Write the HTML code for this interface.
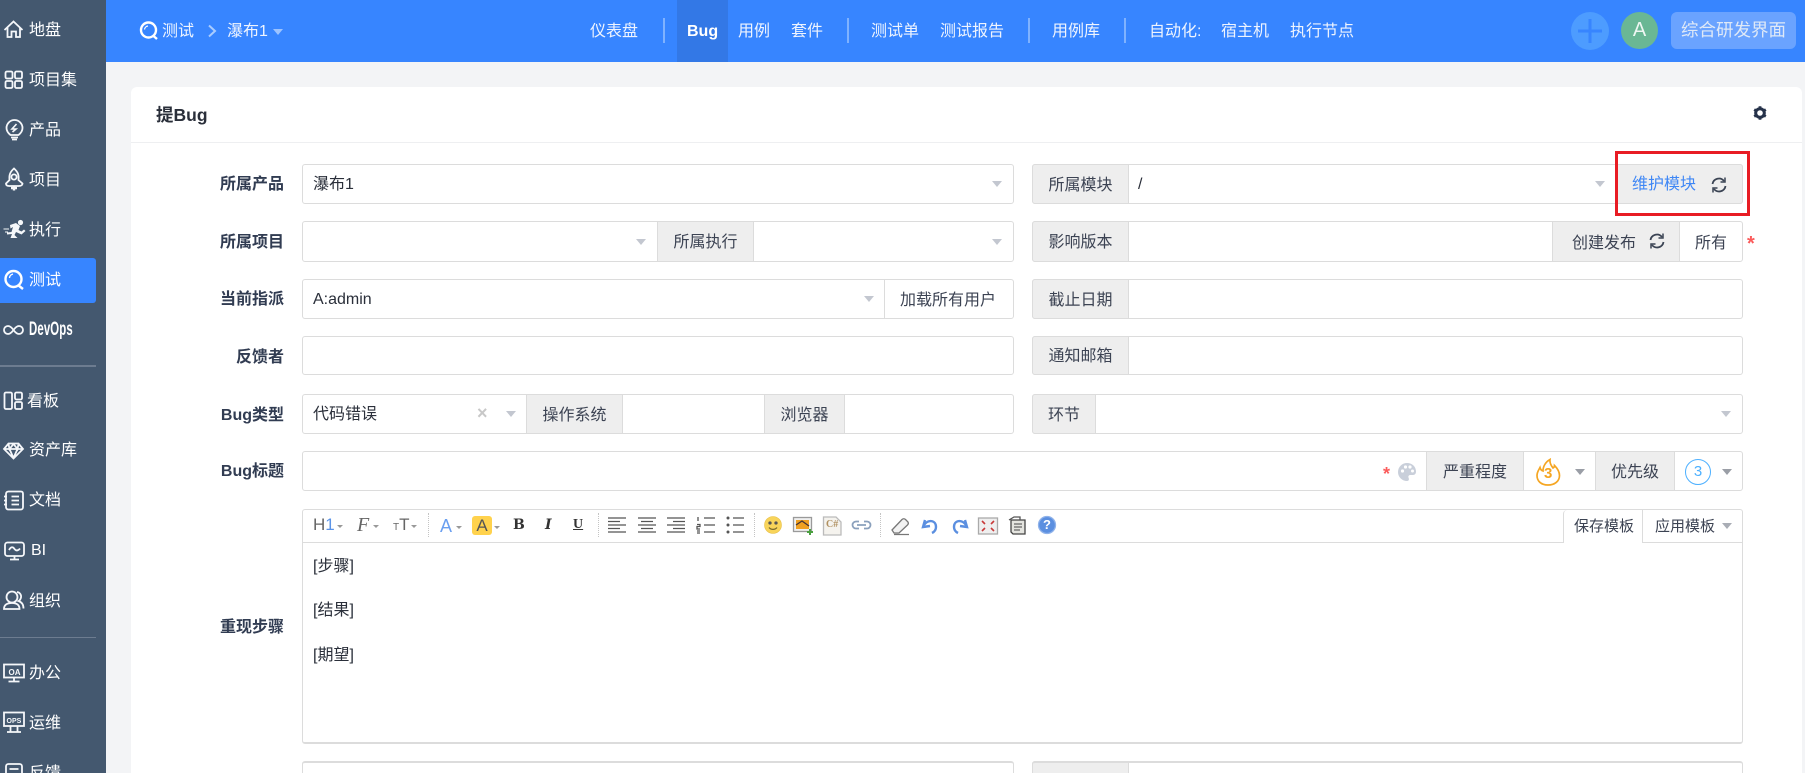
<!DOCTYPE html>
<html lang="zh"><head><meta charset="utf-8"><title>提Bug</title>
<style>
html,body{margin:0;padding:0;width:1805px;height:773px;overflow:hidden;background:#f3f4f6;}
body{position:relative;font-family:"Liberation Sans","Noto Sans CJK SC",sans-serif;font-size:16px;color:#2a2f3a;}
.a{position:absolute;box-sizing:border-box}
.t{position:absolute;white-space:nowrap;line-height:20px;height:20px}
.f{position:absolute;box-sizing:border-box;background:#fff;border:1px solid #dcdcdc;border-radius:3px}
.g{position:absolute;box-sizing:border-box;background:#eee;border:1px solid #dcdcdc;text-align:center;color:#3c4353;line-height:40px;white-space:nowrap}
.l{position:absolute;white-space:nowrap;line-height:20px;height:20px;right:1521px;font-weight:700;color:#313c52}
.c{position:absolute;width:0;height:0;border-left:5px solid transparent;border-right:5px solid transparent;border-top:6px solid #c3c7d0}
.s{color:#fff;left:29px}
.n{color:#eef4ff;top:22px}
.x{position:absolute;width:0;height:0;border-left:3px solid transparent;border-right:3px solid transparent;border-top:3px solid #999}
.m{position:absolute;width:0;border-left:1px dotted #c4c4c4;height:24px;top:513px}
.sep{position:absolute;top:18px;width:1.5px;height:25px;background:#7fb2ff}
</style></head><body>

<!-- sidebar -->
<div class="a" style="left:0;top:0;width:106px;height:773px;background:#44586f"></div>
<div class="a" style="left:0;top:258px;width:96px;height:45px;background:#3785ff;border-radius:0 3px 3px 0"></div>
<div class="a" style="left:0;top:365px;width:96px;height:2px;background:#6d7c90"></div>
<div class="a" style="left:0;top:637px;width:96px;height:1px;background:#6d7c90"></div>
<svg class="a" style="left:0;top:0" width="106" height="773" viewBox="0 0 106 773" fill="none" stroke="#f5f7fa" stroke-width="1.8">
<path d="M4.5 30L13.5 21.5L22.5 30M7.500 27.500V37H11.500V31.500H16V37H20V27.500"/>
<rect x="5.500" y="71.500" width="7" height="7" rx="1.500"/><rect x="15" y="71.500" width="7" height="7" rx="1.500"/><rect x="5.500" y="81" width="7" height="7" rx="1.500"/><rect x="15" y="81" width="7" height="7" rx="1.500"/>
<path d="M10.500 135C8 133 6.500 131 6.500 128A8 8 0 0 1 22.500 128C22.500 131 21 133 18.500 135ZM11 137.500H18M12 139.500H17"/><path d="M16.500 124L12 129H16L12.500 132" stroke-width="1.600"/>
<path d="M14 168.500C10 172 9 175 9.500 180L6 183.500C6 185 7 186 9 186H19C21 186 22.500 185 22.500 183.500L18.500 180C19 175 18 172 14 168.500Z"/><circle cx="14" cy="177" r="2.600"/><path d="M11 188H17M14 186V190.500" stroke-width="2.400"/>
<g fill="#f5f7fa" stroke="none"><circle cx="20.500" cy="222.500" r="2.600"/><path d="M10 225L16 223L20 226L18.500 230L21.500 231.500L24 229.500L25.500 231L21.500 234.500L16 232L14.500 235L17.500 238H10.500L12 234L7 234.500V232.500L11.500 232L13 227L10.500 228.500Z"/></g><path d="M3.500 229H9M5 232H8" stroke-width="1"/>
<circle cx="13.500" cy="279" r="8" stroke="#fff" stroke-width="2.400"/><path d="M18.500 285.500L23 289" stroke="#fff" stroke-width="2.400"/><path d="M9.500 278A4.500 4.500 0 0 1 13 274" stroke="#fff" stroke-width="1.300"/>
<path d="M13.500 330C11 326.500 9.500 326 8 326A4 4 0 0 0 8 334C9.500 334 11 333.500 13.500 330C16 326.500 17.500 326 19 326A4 4 0 0 1 19 334C17.500 334 16 333.500 13.500 330Z"/>
<rect x="4.500" y="392.500" width="7.500" height="16.500" rx="1.500"/><rect x="15" y="392.500" width="7" height="7" rx="1.500"/><rect x="15" y="402" width="7" height="7" rx="1.500"/>
<path d="M8.500 443.500H18.500L23 449L13.500 458.500L4 449ZM4 449H23M9.500 449L13.500 458M17.500 449L13.500 458M8.500 444L9.500 449L13.500 444L17.500 449L18.500 444"/>
<path d="M6 494C6 492.500 7 491.500 8.500 491.500H21C22.500 491.500 23 492.500 23 494V507C23 508.500 22 509.500 21 509.500H8.500C7 509.500 6 508.500 6 507ZM11.500 496.500H19M11.500 500.500H19M11.500 504.500H19M4 496.500H7M4 500.500H7M4 504.500H7"/>
<rect x="5" y="542.500" width="19" height="13.500" rx="2.500"/><path d="M9 550C11 546.500 13 546.500 14.500 549C16 551 18 551 20 548.500M14.500 556V559M10 559.500H19"/>
<circle cx="12" cy="597" r="5.500"/><path d="M4 609C4 605 7 603 12 603C17 603 19.500 605 19.500 609ZM17 592C20 592.500 21.500 595 21 597.500C20.500 599.500 19.500 600.500 18.500 601C21.500 602 23.500 604.500 23.500 608.500"/>
<rect x="4" y="664.500" width="20" height="13" /><path d="M14 678V681M8.500 681.500H19.500" stroke-width="1.800"/>
<rect x="4" y="712.500" width="20" height="13.500" /><path d="M10.500 726V732M17.500 726V732M7 732H21" stroke-width="1.800"/>
<path d="M6 773V766.500C6 765 7 764 8.500 764H19.500C21 764 22 765 22 766.500V773M9.500 769H18.500"/>
<g stroke="none" fill="#f5f7fa" font-family="Liberation Sans" font-weight="700"><text x="8.500" y="675" font-size="8">OA</text><text x="6.500" y="723" font-size="7">OPS</text></g>
</svg>
<div class="t s" style="top:21px">地盘</div>
<div class="t s" style="top:71px">项目集</div>
<div class="t s" style="top:121px">产品</div>
<div class="t s" style="top:171px">项目</div>
<div class="t s" style="top:221px">执行</div>
<div class="t s" style="top:271px">测试</div>
<div class="t s" style="top:320px;font-weight:700;transform:scaleX(.6);transform-origin:0 50%;font-size:19px;letter-spacing:.2px">DevOps</div>
<div class="t s" style="top:392px;left:27px">看板</div>
<div class="t s" style="top:441px">资产库</div>
<div class="t s" style="top:491px">文档</div>
<div class="t s" style="top:541px;left:31px">BI</div>
<div class="t s" style="top:592px">组织</div>
<div class="t s" style="top:664px">办公</div>
<div class="t s" style="top:714px">运维</div>
<div class="t s" style="top:764px">反馈</div>

<!-- header -->
<div class="a" style="left:106px;top:0;width:1699px;height:62px;background:#3785ff"></div>
<div class="a" style="left:677px;top:0;width:51px;height:62px;background:#3378e6"></div>
<svg class="a" style="left:136px;top:18px" width="26" height="26" viewBox="0 0 26 26" fill="none" stroke="#fff" stroke-width="2.400"><circle cx="12.500" cy="12" r="7.500"/><path d="M17.500 18L21 21"/><path d="M8.500 11.500A4 4 0 0 1 12 8" stroke-width="1.200"/></svg>
<div class="t" style="left:162px;top:22px;color:#eef4ff">测试</div>
<svg class="a" style="left:206px;top:23px" width="12" height="16" viewBox="0 0 12 16" fill="none" stroke="#a9ccff" stroke-width="2"><path d="M3 2.500L9 8L3 13.500"/></svg>
<div class="t" style="left:227px;top:22px;color:#eef4ff">瀑布1</div>
<div class="c" style="left:273px;top:29px;border-top-color:#9cc3ff"></div>
<div class="t n" style="left:590px">仪表盘</div>
<div class="sep" style="left:663px"></div>
<div class="t" style="left:687px;top:22px;color:#fff;font-weight:700;">Bug</div>
<div class="t n" style="left:738px">用例</div>
<div class="t n" style="left:791px">套件</div>
<div class="sep" style="left:847px"></div>
<div class="t n" style="left:871px">测试单</div>
<div class="t n" style="left:940px">测试报告</div>
<div class="sep" style="left:1028px"></div>
<div class="t n" style="left:1052px">用例库</div>
<div class="sep" style="left:1124px"></div>
<div class="t n" style="left:1149px">自动化:</div>
<div class="t n" style="left:1221px">宿主机</div>
<div class="t n" style="left:1290px">执行节点</div>
<svg class="a" style="left:1570px;top:11px" width="40" height="40" viewBox="0 0 40 40"><circle cx="20" cy="20" r="19" fill="#4d9cff"/><path d="M20 8V32M8 20H32" stroke="#3785ff" stroke-width="3"/></svg>
<div class="a" style="left:1621px;top:12px;width:37px;height:37px;border-radius:50%;background:#6ab794;color:#eef6f2;font-size:20px;line-height:37px;text-align:center">A</div>
<div class="a" style="left:1671px;top:12px;width:125px;height:37px;border-radius:6px;background:#6aa3ff;color:#dfe9f7;font-size:17.5px;line-height:36px;text-align:center;white-space:nowrap">综合研发界面</div>

<!-- card -->
<div class="a" style="left:131px;top:87px;width:1671px;height:700px;background:#fff;border-radius:6px"></div>
<div class="a" style="left:131px;top:142px;width:1671px;height:1px;background:#eeeff1"></div>
<div class="t" style="left:156px;top:105px;font-weight:700;font-size:17.5px">提Bug</div>
<svg class="a" style="left:1753px;top:106px" width="14" height="14" viewBox="0 0 14 14"><circle cx="7" cy="7" r="4.300" fill="none" stroke="#26324a" stroke-width="3"/><path d="M7 .3V2.500M7 11.500V13.700M1.200 3.600L3.100 4.700M10.900 9.300L12.800 10.400M1.200 10.400L3.100 9.300M10.900 4.700L12.800 3.600" stroke="#26324a" stroke-width="2.800"/></svg>

<!-- labels -->
<div class="l" style="top:175px">所属产品</div>
<div class="l" style="top:233px">所属项目</div>
<div class="l" style="top:290px">当前指派</div>
<div class="l" style="top:348px">反馈者</div>
<div class="l" style="top:406px">Bug类型</div>
<div class="l" style="top:462px">Bug标题</div>
<div class="l" style="top:618px">重现步骤</div>

<!-- row 1 -->
<div class="f" style="left:302px;top:164px;width:712px;height:40px"></div>
<div class="t" style="left:313px;top:175px">瀑布1</div><div class="c" style="left:992px;top:181px"></div>
<div class="f" style="left:1032px;top:164px;width:711px;height:40px"></div>
<div class="g" style="left:1032px;top:164px;width:97px;height:40px;line-height:41px;border-radius:3px 0 0 3px">所属模块</div>
<div class="t" style="left:1138px;top:175px">/</div><div class="c" style="left:1595px;top:181px"></div>
<div class="g" style="left:1617px;top:164px;width:126px;height:40px;border-radius:0 3px 3px 0"></div>
<div class="t" style="left:1632px;top:175px;color:#3f87f5">维护模块</div>
<svg class="a" style="left:1710px;top:176px" width="18" height="18" viewBox="0 0 18 18" fill="none" stroke="#3a4353" stroke-width="1.800"><path d="M2.500 8A6.500 6.500 0 0 1 14 5M15.500 10A6.500 6.500 0 0 1 4 13"/><path d="M15 1.500V6H10.500M3 16.500V12H7.500" stroke-width="1.500"/></svg>
<div class="a" style="left:1615px;top:151px;width:135px;height:65px;border:3px solid #e81c24"></div>

<!-- row 2 -->
<div class="f" style="left:302px;top:221px;width:712px;height:41px"></div>
<div class="g" style="left:657px;top:221px;width:97px;height:41px;line-height:41px">所属执行</div>
<div class="c" style="left:636px;top:239px"></div><div class="c" style="left:992px;top:239px"></div>
<div class="f" style="left:1032px;top:221px;width:711px;height:41px"></div>
<div class="g" style="left:1032px;top:221px;width:97px;height:41px;line-height:41px;border-radius:3px 0 0 3px">影响版本</div>
<div class="g" style="left:1552px;top:221px;width:128px;height:41px"></div>
<div class="t" style="left:1572px;top:234px;color:#3c4353">创建发布</div>
<svg class="a" style="left:1648px;top:232px" width="18" height="18" viewBox="0 0 18 18" fill="none" stroke="#3a4353" stroke-width="1.800"><path d="M2.500 8A6.500 6.500 0 0 1 14 5M15.500 10A6.500 6.500 0 0 1 4 13"/><path d="M15 1.500V6H10.500M3 16.500V12H7.500" stroke-width="1.500"/></svg>
<div class="t" style="left:1695px;top:234px;color:#3c4353">所有</div>
<div class="t" style="left:1747px;top:234px;color:#fb5b5b;font-size:20px;font-weight:700">*</div>

<!-- row 3 -->
<div class="f" style="left:302px;top:279px;width:712px;height:40px"></div>
<div class="t" style="left:313px;top:290px">A:admin</div><div class="c" style="left:864px;top:296px"></div>
<div class="a" style="left:884px;top:279px;width:1px;height:40px;background:#dcdcdc"></div>
<div class="t" style="left:900px;top:291px;color:#3c4353;font-size:16px">加载所有用户</div>
<div class="f" style="left:1032px;top:279px;width:711px;height:40px"></div>
<div class="g" style="left:1032px;top:279px;width:97px;height:40px;line-height:41px;border-radius:3px 0 0 3px">截止日期</div>

<!-- row 4 -->
<div class="f" style="left:302px;top:336px;width:712px;height:39px"></div>
<div class="f" style="left:1032px;top:336px;width:711px;height:39px"></div>
<div class="g" style="left:1032px;top:336px;width:97px;height:39px;border-radius:3px 0 0 3px">通知邮箱</div>

<!-- row 5 -->
<div class="f" style="left:302px;top:394px;width:712px;height:40px"></div>
<div class="t" style="left:313px;top:405px">代码错误</div>
<div class="t" style="left:477px;top:403px;color:#c8c8c8;font-size:18px;font-weight:700">×</div>
<div class="c" style="left:506px;top:411px"></div>
<div class="g" style="left:526px;top:394px;width:97px;height:40px;line-height:41px">操作系统</div>
<div class="g" style="left:764px;top:394px;width:81px;height:40px;line-height:41px">浏览器</div>
<div class="f" style="left:1032px;top:394px;width:711px;height:40px"></div>
<div class="g" style="left:1032px;top:394px;width:64px;height:40px;line-height:41px;border-radius:3px 0 0 3px">环节</div>
<div class="c" style="left:1721px;top:411px"></div>

<!-- row 6 -->
<div class="f" style="left:302px;top:451px;width:1441px;height:40px"></div>
<div class="t" style="left:1383px;top:464px;color:#fb5b5b;font-size:18px;font-weight:700">*</div>
<svg class="a" style="left:1397px;top:462px" width="20" height="20" viewBox="0 0 20 20"><path d="M10 1A9 9 0 0 0 10 19C12.500 19 12 16.500 11.500 15.500C11 14 12 13 13.500 13H16C18 13 19 11.500 19 9.500C19 4.500 15 1 10 1Z" fill="#c9cfda"/><g fill="#fff"><circle cx="5.500" cy="9" r="1.600"/><circle cx="8.500" cy="5" r="1.600"/><circle cx="13" cy="5" r="1.600"/><circle cx="15.500" cy="9" r="1.500"/></g></svg>
<div class="g" style="left:1426px;top:451px;width:98px;height:40px;line-height:41px">严重程度</div>
<svg class="a" style="left:1535px;top:458px" width="26" height="28" viewBox="0 0 26 28" fill="none" stroke="#f5a623" stroke-width="1.700"><path d="M13 27C6 27 2 23 2 17.500C2 14 4 11.500 5 9.500C5.500 11.500 6.500 12.500 8 13C8 8.500 10.500 4 15 1.500C14.500 5 16 7.500 18 10C19 9.500 19.500 8.500 19.500 7.500C22.500 10.500 24.500 14 24.500 17.500C24.500 23 20 27 13 27Z"/></svg>
<div class="t" style="left:1544px;top:464px;color:#f5a623;font-size:15px;font-weight:700">3</div>
<div class="c" style="left:1575px;top:469px;border-top-color:#9a9ea6"></div>
<div class="g" style="left:1595px;top:451px;width:80px;height:40px;line-height:41px">优先级</div>
<div class="a" style="left:1685px;top:459px;width:26px;height:26px;border:1.5px solid #4db0ff;border-radius:50%;color:#4db0ff;text-align:center;line-height:23px;font-size:15px">3</div>
<div class="c" style="left:1722px;top:469px;border-top-color:#9a9ea6"></div>

<!-- editor -->
<div class="f" style="left:302px;top:509px;width:1441px;height:235px;border-bottom:2px solid #dcdcdc"></div>
<div class="a" style="left:303px;top:542px;width:1440px;height:1px;background:#dcdcdc"></div>
<div class="t" style="left:313px;top:515px;font-size:17px;color:#666">H<span style="color:#5b94e8">1</span></div><div class="x" style="left:337px;top:525px"></div>
<div class="t" style="left:357px;top:515px;font-size:20px;color:#666;font-style:italic;font-family:'Liberation Serif',serif">F</div><div class="x" style="left:373px;top:525px"></div>
<div class="t" style="left:393px;top:515px;font-size:17px;color:#666"><span style="font-size:10px">T</span>T</div><div class="x" style="left:411px;top:525px"></div>
<div class="m" style="left:428px"></div>
<div class="t" style="left:440px;top:516px;font-size:18px;color:#6a9ff0">A</div><div class="x" style="left:456px;top:526px"></div>
<div class="a" style="left:472px;top:516px;width:20px;height:19px;background:#ffd24d;border-radius:3px;text-align:center;line-height:19px;color:#555;font-size:17px">A</div><div class="x" style="left:494px;top:526px"></div>
<div class="t" style="left:513px;top:515px;font-size:14px;font-weight:700;font-family:'DejaVu Serif',serif;color:#333">B</div>
<div class="t" style="left:545px;top:515px;font-size:14px;font-weight:700;font-style:italic;font-family:'DejaVu Serif',serif;color:#333">I</div>
<div class="t" style="left:573px;top:515px;font-size:14px;font-weight:700;text-decoration:underline;font-family:'Liberation Serif',serif;color:#333">U</div>
<div class="m" style="left:598px"></div>
<div class="m" style="left:754px"></div>
<div class="m" style="left:880px"></div>
<svg class="a" style="left:600px;top:510px" width="460" height="32" viewBox="600 510 460 32" fill="none" stroke="#555" stroke-width="1.300">
<path d="M608 518H626M608 521.500H620M608 525H626M608 528.500H620M608 532H626"/>
<path d="M638 518H656M641 521.500H653M638 525H656M641 528.500H653M638 532H656"/>
<path d="M667 518H685M673 521.500H685M667 525H685M673 528.500H685M667 532H685"/>
<path d="M704 518H715M704 525H715M704 532H715M698 517V521M697 524.500H700V526.500H697V529H700M697 531H700M697 533H700"/>
<path d="M733 518H744M733 525H744M733 532H744"/><g fill="#555" stroke="none"><circle cx="728" cy="518" r="1.500"/><circle cx="728" cy="525" r="1.500"/><circle cx="728" cy="532" r="1.500"/></g>
<circle cx="773" cy="525" r="8.500" fill="#f8d45a" stroke="#e8c04a" stroke-width=".6"/><circle cx="770" cy="523" r="1" fill="#665"/><circle cx="776" cy="523" r="1" fill="#665"/><path d="M769 527.500C771 530 775 530 777 527.500" stroke="#7a6a2a"/>
<rect x="793.500" y="517.500" width="18" height="14" fill="#f0f0f0" stroke="#9a9a9a"/><rect x="796" y="520" width="13" height="9" fill="#f0a020" stroke="none"/><path d="M796 525L802 521L809 526" stroke="#433"/><path d="M810 529V535M807 532H813" stroke="#4aa040" stroke-width="2"/>
<path d="M823.500 517H836L841 522V535H823.500Z" fill="#f5f3ee" stroke="#bbb"/>
<path d="M859 521.500H856A3.500 3.500 0 0 0 856 528.500H859M864 521.500H867A3.500 3.500 0 0 1 867 528.500H864M857 525H866" stroke="#8aa0bc" stroke-width="1.800"/>
<path d="M892 530L902 519.500C903 518.500 904.500 518.500 905.500 519.500L908 522C908.500 523 908.500 524 907.500 525L899 533H894ZM894 534.500H909" stroke="#777" fill="#f2f2f2"/>
<path d="M925 520L923 527L930 526M924 525C928 519 936 520 936 527C936 530 934 532 932 533" stroke="#5b8fe0" stroke-width="2.400"/>
<path d="M965 520L967 527L960 526M966 525C962 519 954 520 954 527C954 530 956 532 958 533" stroke="#5b8fe0" stroke-width="2.400"/>
<rect x="978.500" y="518" width="19" height="16" fill="#efefef" stroke="#aaa"/><path d="M982 521L985 524M994 521L991 524M982 531L985 528M994 531L991 528" stroke="#c83a3a" stroke-width="1.600"/>
<path d="M1011 520H1025V534H1013L1011 532Z" fill="#e4e4df" stroke="#444"/><path d="M1014 524H1022M1014 527H1022M1014 530H1020" stroke="#666"/><path d="M1009 520L1014 517H1020V520" stroke="#555"/>
<circle cx="1047" cy="525" r="8.500" fill="#5b8fe0" stroke="#8fb2ea"/>
</svg>
<div class="t" style="left:826px;top:515px;font-size:10px;font-weight:700;color:#b09060;font-family:'Liberation Serif',serif">C#</div>
<div class="t" style="left:1043px;top:515px;font-size:13px;font-weight:700;color:#fff">?</div>
<div class="a" style="left:1563px;top:510px;width:80px;height:33px;background:#fff;border-left:1px solid #dcdcdc;border-right:1px solid #dcdcdc;border-radius:4px 0 0 0"></div>
<div class="t" style="left:1574px;top:517px;font-size:15px;color:#3c4353">保存模板</div>
<div class="t" style="left:1655px;top:517px;font-size:15px;color:#3c4353">应用模板</div>
<div class="c" style="left:1722px;top:523px;border-top-color:#a9adb5"></div>
<div class="t" style="left:313px;top:557px">[步骤]</div>
<div class="t" style="left:313px;top:601px">[结果]</div>
<div class="t" style="left:313px;top:646px">[期望]</div>

<!-- row 8 -->
<div class="f" style="left:302px;top:761px;width:712px;height:40px;border-top-width:2px"></div>
<div class="f" style="left:1032px;top:761px;width:711px;height:40px;border-top-width:2px"></div>
<div class="g" style="left:1032px;top:761px;width:97px;height:40px;border-top-width:2px;border-radius:3px 0 0 0"></div>
</body></html>
